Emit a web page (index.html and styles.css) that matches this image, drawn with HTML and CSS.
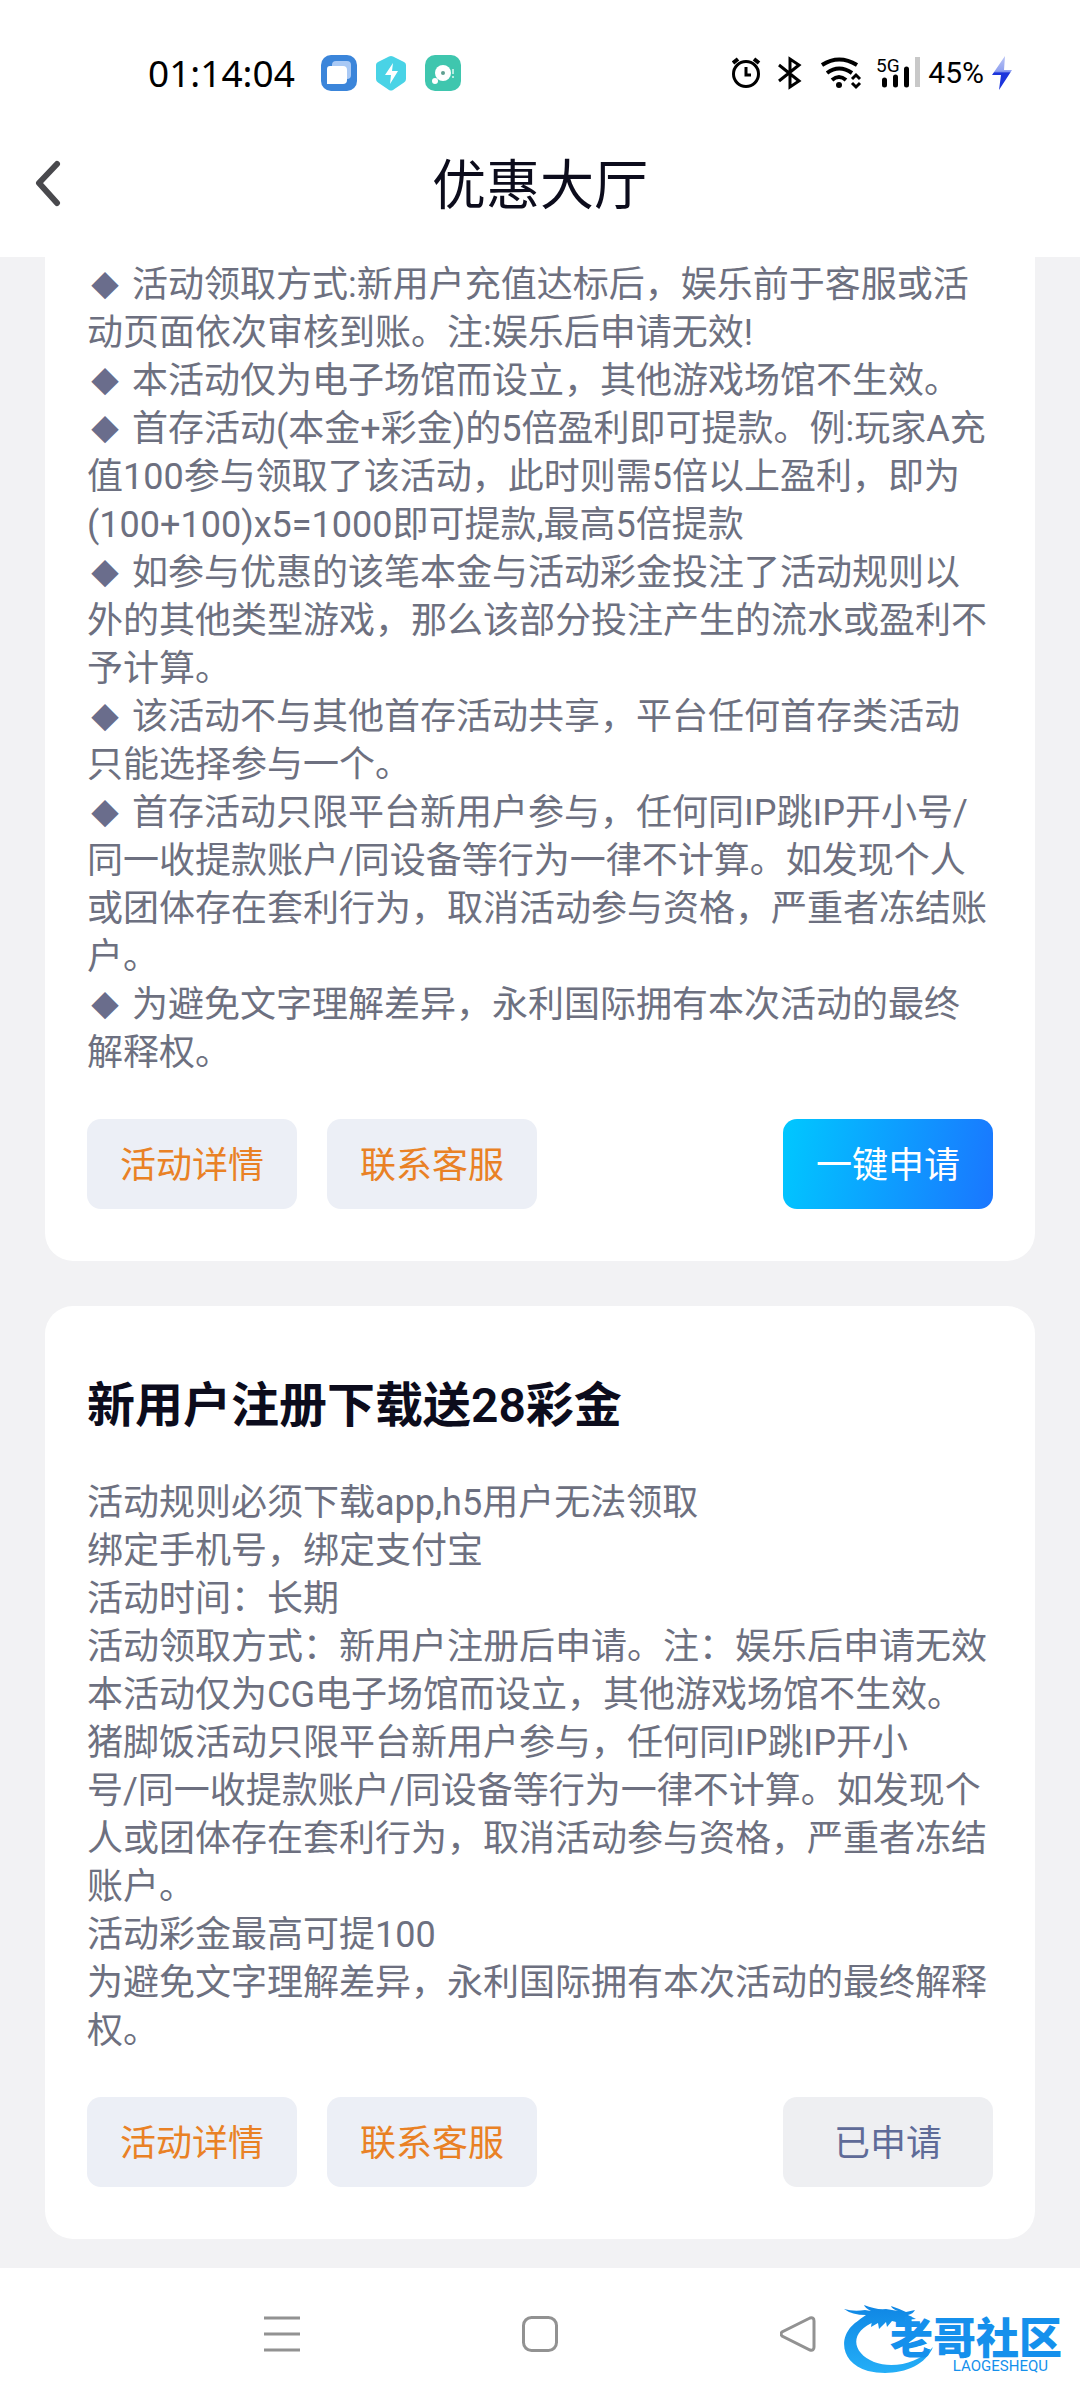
FILE: index.html
```html
<!DOCTYPE html>
<html lang="zh-CN">
<head>
<meta charset="utf-8">
<meta name="viewport" content="width=device-width, initial-scale=1">
<title>优惠大厅</title>
<link rel="stylesheet" href="styles.css">
</head>
<body>
<div class="statusbar">
  <div class="status-left">
    <time class="clock">01:14:04</time>
    <svg class="app-icon" viewBox="0 0 36 36" aria-hidden="true">
      <rect width="36" height="36" rx="10" fill="#3b85da"/>
      <rect x="11" y="6" width="19" height="18" rx="4" fill="#a9c9f5"/>
      <path d="M9 11h13q4 0 4 4v10q0 4-4 4H6V14q0-3 3-3z" fill="#fff"/>
    </svg>
    <svg class="app-icon" viewBox="0 0 36 36" aria-hidden="true">
      <path d="M18 1q1 0 2 .6l11 5.4q2 1 2 3v14q0 2-2 3.500L20 35q-2 1-4 0L5 27.500Q3 26 3 24V10q0-2 2-3l11-5.400Q17 1 18 1z" fill="#49d3e6"/>
      <path d="M20 8 12 20h6l-1 9 8-13h-6z" fill="#fff"/>
    </svg>
    <svg class="app-icon" viewBox="0 0 36 36" aria-hidden="true">
      <rect width="36" height="36" rx="10" fill="#3fc6ae"/>
      <circle cx="18" cy="18" r="8" fill="#fff"/>
      <circle cx="18" cy="18" r="2" fill="#5f9f90"/>
      <circle cx="10" cy="26" r="3" fill="#fff"/>
      <path d="M28 14v5M28 21v2" stroke="#b5ebe0" stroke-width="2"/>
    </svg>
  </div>
  <div class="status-right">
    <svg width="188" height="36" viewBox="732 55 188 36" aria-hidden="true">
      <g fill="none" stroke="#000" stroke-width="3">
        <circle cx="746" cy="74" r="12.500"/>
        <path d="M746 67v8h5"/>
        <path d="M733 63l5-4M759 63l-5-4" stroke-width="4"/>
        <path d="M779 65l20 16-9 6V59l9 6-20 16"/>
      </g>
      <g fill="none" stroke="#000" stroke-width="4">
        <path d="M822 65q17-11 35 0M827 73q12-9 25 0M832 80q7-6 14 0"/>
        <path d="M852 79l4-4 4 4M852 83l4 4 4-4" stroke-width="3"/>
      </g>
      <circle cx="839" cy="85" r="3"/>
      <text class="network" x="876" y="72">5G</text>
      <path d="M884.500 80v5M895.500 77v8M906.500 69v16" stroke="#000" stroke-width="5" stroke-linecap="round"/>
      <path d="M917.500 57v30" stroke="#c8c8c8" stroke-width="5"/>
    </svg>
    <span class="battery">45%</span>
    <svg class="bolt" width="20" height="36" viewBox="0 0 20 36" aria-hidden="true">
      <defs><linearGradient id="charge" x1="0" y1="0" x2="0" y2="1"><stop offset="0" stop-color="#b9c4f5"/><stop offset=".45" stop-color="#8fa0ef"/><stop offset=".5" stop-color="#1c35dc"/><stop offset="1" stop-color="#1c35dc"/></linearGradient></defs>
      <path d="M13 1 0 20h9L7 35 20 15h-8z" fill="url(#charge)"/>
    </svg>
  </div>
</div>

<header class="topbar">
  <button class="back" type="button" aria-label="返回">
    <svg width="28" height="48" viewBox="0 0 28 48"><path d="M23 4 5 23l18 20" fill="none" stroke="#49494d" stroke-width="6" stroke-linecap="round" stroke-linejoin="round"/></svg>
  </button>
  <h1>优惠大厅</h1>
</header>

<main class="promos">
  <article class="card card-continued">
    <div class="rules">
      <p><span class="mark">◆</span> 活动领取方式:新用户充值达标后，娱乐前于客服或活动页面依次审核到账。注:娱乐后申请无效!</p>
      <p><span class="mark">◆</span> 本活动仅为电子场馆而设立，其他游戏场馆不生效。</p>
      <p><span class="mark">◆</span> 首存活动(本金+彩金)的5倍盈利即可提款。例:玩家A充值100参与领取了该活动，此时则需5倍以上盈利，即为(100+100)x5=1000即可提款,最高5倍提款</p>
      <p><span class="mark">◆</span> 如参与优惠的该笔本金与活动彩金投注了活动规则以外的其他类型游戏，那么该部分投注产生的流水或盈利不予计算。</p>
      <p><span class="mark">◆</span> 该活动不与其他首存活动共享，平台任何首存类活动只能选择参与一个。</p>
      <p><span class="mark">◆</span> 首存活动只限平台新用户参与，任何同IP跳IP开小号/同一收提款账户/同设备等行为一律不计算。如发现个人或团体存在套利行为，取消活动参与资格，严重者冻结账户。</p>
      <p><span class="mark">◆</span> 为避免文字理解差异，永利国际拥有本次活动的最终解释权。</p>
    </div>
    <div class="actions">
      <button class="btn" type="button">活动详情</button>
      <button class="btn" type="button">联系客服</button>
      <button class="btn btn-apply" type="button">一键申请</button>
    </div>
  </article>

  <article class="card">
    <h2>新用户注册下载送28彩金</h2>
    <div class="rules">
      <p>活动规则必须下载app,h5用户无法领取</p>
      <p>绑定手机号，绑定支付宝</p>
      <p>活动时间：长期</p>
      <p>活动领取方式：新用户注册后申请。注：娱乐后申请无效</p>
      <p>本活动仅为CG电子场馆而设立，其他游戏场馆不生效。</p>
      <p>猪脚饭活动只限平台新用户参与，任何同IP跳IP开小<br>号/同一收提款账户/同设备等行为一律不计算。如发现个人或团体存在套利行为，取消活动参与资格，严重者冻结账户。</p>
      <p>活动彩金最高可提100</p>
      <p>为避免文字理解差异，永利国际拥有本次活动的最终解释权。</p>
    </div>
    <div class="actions">
      <button class="btn" type="button">活动详情</button>
      <button class="btn" type="button">联系客服</button>
      <button class="btn btn-applied" type="button">已申请</button>
    </div>
  </article>
</main>

<nav class="sysnav">
  <button type="button" aria-label="最近任务"><svg width="36" height="36" viewBox="0 0 36 36"><path d="M0 2h36M0 18h36M0 34h36"/></svg></button>
  <button type="button" aria-label="主页"><svg width="36" height="36" viewBox="0 0 36 36"><rect x="1.500" y="1.500" width="33" height="33" rx="8"/></svg></button>
  <button type="button" aria-label="后退"><svg width="36" height="36" viewBox="0 0 36 36"><path d="M30 2 2 16q-2 2 0 4l28 14q4 1 4-3V5q0-4-4-3z"/></svg></button>
  <div class="watermark">
    <svg width="96" height="80" viewBox="838 2297 96 80" aria-hidden="true">
      <defs><linearGradient id="dragon" gradientUnits="userSpaceOnUse" x1="0" y1="2305" x2="0" y2="2375"><stop offset="0" stop-color="#0f86e4"/><stop offset="1" stop-color="#25b0f8"/></linearGradient></defs>
      <path fill="url(#dragon)" d="M870 2315C834 2324 833 2362 866 2371C892 2377 922 2369 931 2347C916 2364 890 2369 872 2362C850 2353 846 2332 874 2321Z"/>
      <path fill="url(#dragon)" d="M842 2309Q852 2312 863 2310L869 2311Q863 2308 862 2305Q874 2310 884 2309L896 2311Q890 2309 889 2306Q898 2309 904 2312L913 2310Q911 2314 906 2315L914 2319L903 2320L912 2323L905 2326Q897 2322 890 2321L885 2327L884 2322L877 2329L876 2323L869 2327L870 2320Q858 2322 850 2332Q852 2322 864 2315Q850 2315 842 2309Z"/>
    </svg>
    <strong>老哥社区</strong>
    <small>LAOGESHEQU</small>
  </div>
</nav>
</body>
</html>
```
FILE: styles.css
```css
* { box-sizing: border-box; }

body {
  margin: 0;
  background: #f2f2f4;
  color: #6d7080;
  font-family: Roboto, "Noto Sans CJK SC", sans-serif;
  font-size: 36px;
  line-height: 48px;
}

h1, h2, p { margin: 0; }

button {
  padding: 0;
  border: 0;
  background: none;
  color: inherit;
  font: inherit;
}

svg { display: block; }

.statusbar {
  display: flex;
  align-items: center;
  justify-content: space-between;
  height: 112px;
  padding: 34px 68px 0 148px;
  background: #fff;
  color: #000;
}

.status-left, .status-right { display: flex; align-items: center; }
.status-left { gap: 16px; }
.status-right { gap: 8px; }
.clock { margin-right: 10px; font-family: "Noto Sans", sans-serif; font-size: 37px; line-height: 44px; }
.app-icon { width: 36px; height: 36px; }
.network { font-size: 19px; }
.battery { font-size: 30px; line-height: 36px; }

.topbar {
  display: grid;
  grid-template-columns: 120px 1fr 120px;
  align-items: center;
  height: 145px;
  padding-bottom: 2px;
  background: #fff;
}

.back { justify-self: start; padding: 0 34px; }
.topbar h1 {
  padding-top: 6px;
  color: #0c0c1c;
  font-size: 54px;
  font-weight: 400;
  line-height: 72px;
  text-align: center;
}

.promos {
  display: grid;
  gap: 45px;
  padding: 0 45px 29px;
}

.card {
  padding: 43px 42px 52px;
  border-radius: 28px;
  background: #fff;
}

.card-continued { padding-top: 4px; border-radius: 0 0 28px 28px; }

.mark {
  padding: 0 4px;
  color: #6a6d8c;
  font-size: 28px;
  line-height: 28px;
}

.card h2 {
  padding: 21px 0 37px;
  color: #0c0c1c;
  font-size: 48px;
  font-weight: 600;
  line-height: 72px;
}

.actions { display: flex; gap: 30px; margin-top: 42px; }

.btn {
  width: 210px;
  height: 90px;
  padding-top: 4px;
  border-radius: 14px;
  background: #eceff6;
  color: #e98125;
}

.btn-apply {
  margin-left: auto;
  background: linear-gradient(100deg, #00c8ff, #1a76ff);
  color: #fff;
}

.btn-applied { margin-left: auto; background: #eeeff2; color: #5f6b98; }

.sysnav {
  position: relative;
  display: flex;
  align-items: center;
  justify-content: center;
  gap: 222px;
  height: 132px;
  background: #fff;
}

.sysnav button svg { fill: none; stroke: #929292; stroke-width: 3; }

.watermark {
  position: absolute;
  right: 18px;
  bottom: 23px;
  display: grid;
  grid-template-columns: 50px auto;
  grid-template-rows: 60px 20px;
  color: #1590ec;
}

.watermark svg { grid-row: 1 / 3; grid-column: 1; }
.watermark strong { grid-row: 1; grid-column: 2; padding-top: 24px; font-size: 43px; font-weight: 900; line-height: 36px; }
.watermark small { grid-row: 2; grid-column: 2; padding-right: 14px; font-size: 15px; line-height: 18px; text-align: right; }
```
